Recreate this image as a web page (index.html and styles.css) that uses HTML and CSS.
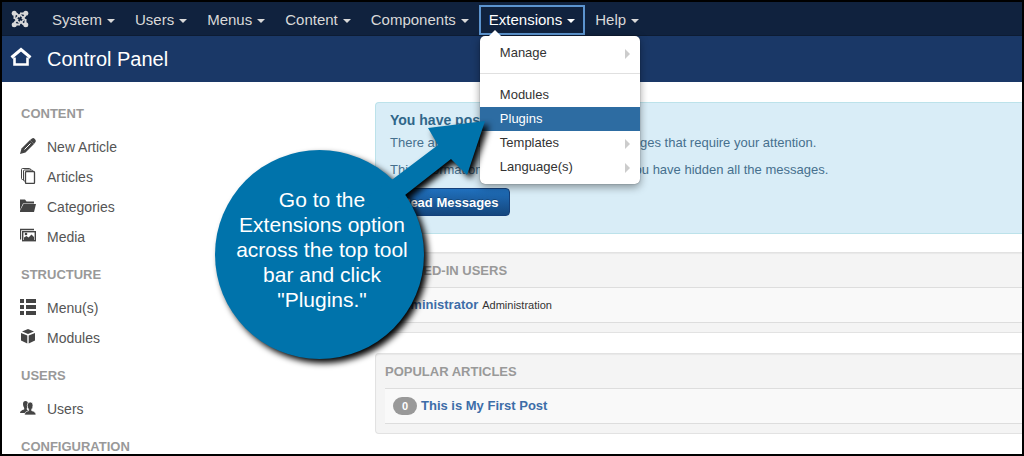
FILE: index.html
```
<!DOCTYPE html>
<html lang="en">
<head>
    <meta charset="UTF-8">
    <title>Control Panel</title>
    <link rel="stylesheet" href="styles.css">
</head>
<body>
    <div id="container">
        <nav class="navbar">
            <a class="brand" href="#" aria-label="Joomla">
                <svg width="18" height="18" viewBox="0 0 18 18" fill="none" stroke="#d9d9d9">
                    <path d="M3.500 9V5.500Q3.500 3 6 4L9 7M9 3.500H12.500Q15 3.500 14 6L11 9M14.500 9V12.500Q14.500 15 12 14L9 11M9 14.500H5.500Q3 14.500 4 12L7 9" stroke-width="2"/>
                    <path d="M4.500 9L9 4.500L13.500 9L9 13.500Z" stroke-width="1.500"/>
                    <g fill="#d9d9d9" stroke="none">
                        <circle cx="3.200" cy="3.200" r="2.500"/>
                        <circle cx="14.800" cy="3.200" r="2.500"/>
                        <circle cx="3.200" cy="14.800" r="2.500"/>
                        <circle cx="14.800" cy="14.800" r="2.500"/>
                    </g>
                </svg>
            </a>
            <ul class="nav">
                <li><a href="#">System<span class="caret"></span></a></li>
                <li><a href="#">Users<span class="caret"></span></a></li>
                <li><a href="#">Menus<span class="caret"></span></a></li>
                <li><a href="#">Content<span class="caret"></span></a></li>
                <li><a href="#">Components<span class="caret"></span></a></li>
                <li class="open">
                    <a href="#">Extensions<span class="caret"></span></a>
                    <ul class="dropdown">
                        <li><a class="sub" href="#">Manage</a></li>
                        <li class="divider"></li>
                        <li><a href="#">Modules</a></li>
                        <li><a class="selected" href="#">Plugins</a></li>
                        <li><a class="sub" href="#">Templates</a></li>
                        <li><a class="sub" href="#">Language(s)</a></li>
                    </ul>
                </li>
                <li><a href="#">Help<span class="caret"></span></a></li>
            </ul>
        </nav>

        <header class="header">
            <svg width="22" height="20" viewBox="0 0 22 20" fill="none" stroke="#fff">
                <path d="M1.500 10.500L11 2.500L20.500 10.500" stroke-width="3"/>
                <path d="M4.500 10.500V17.500H17.500V10.500" stroke-width="2.600"/>
            </svg>
            <h1>Control Panel</h1>
        </header>

        <div class="content">
            <aside class="sidebar">
                <h2>CONTENT</h2>
                <ul>
                    <li><a href="#">
                        <svg width="16" height="16" viewBox="0 0 16 16">
                            <path d="M0 16L1.500 10.500L10 2L14 6L5.500 14.500Z" fill="#444"/>
                            <path d="M10 2L12 .400Q13.500-.500 14.800 1Q16.400 2.600 15.500 4L14 6Z" fill="#444"/>
                            <path d="M4.500 11.500L10.500 5.500" stroke="#fff" stroke-width="1"/>
                        </svg>New Article</a></li>
                    <li><a href="#">
                        <svg width="16" height="16" viewBox="0 0 16 16" fill="#fff" stroke="#444">
                            <rect x="1.500" y=".500" width="9" height="11" rx="1"/>
                            <rect x="3.500" y="2" width="9" height="11" rx="1"/>
                            <rect x="5.500" y="3.500" width="9" height="12" rx="1" stroke-width="1.300"/>
                        </svg>Articles</a></li>
                    <li><a href="#">
                        <svg width="16" height="16" viewBox="0 0 16 16" fill="#444">
                            <path d="M0 1.500H5L6.500 3.500H14V5.500H3L0 12Z"/>
                            <path d="M3.500 6H16L14 14H0V12.500Z"/>
                        </svg>Categories</a></li>
                    <li><a href="#">
                        <svg width="16" height="16" viewBox="0 0 16 16" fill="none" stroke="#444">
                            <path d="M.500 11.500V1.500H14" stroke-width="1.300"/>
                            <rect x="2.700" y="3.700" width="12.600" height="9" stroke-width="1.400"/>
                            <path d="M4 12V9.500L6.500 8L8.500 9.500L11.500 6.500L14 9V12Z" fill="#444" stroke="none"/>
                            <circle cx="6" cy="6" r="1.300" fill="#444" stroke="none"/>
                        </svg>Media</a></li>
                </ul>
                <h2>STRUCTURE</h2>
                <ul>
                    <li><a href="#">
                        <svg width="16" height="16" viewBox="0 0 16 16" fill="#444">
                            <path d="M0 0H4V4H0ZM6 0H16V4H6ZM0 6H4V10H0ZM6 6H16V10H6ZM0 12H4V16H0ZM6 12H16V16H6Z"/>
                        </svg>Menu(s)</a></li>
                    <li><a href="#">
                        <svg width="16" height="16" viewBox="0 0 16 16" fill="#444">
                            <path d="M8 0L14 2.500L8 5L2 2.500ZM1 4L7.300 6.500V14.500L1 11.500ZM15 4L8.700 6.500V14.500L15 11.500Z"/>
                        </svg>Modules</a></li>
                </ul>
                <h2>USERS</h2>
                <ul>
                    <li><a href="#">
                        <svg width="16" height="16" viewBox="0 0 16 16" fill="#444">
                            <path d="M3 4Q3 1 5.500 1Q8 1 8 4Q8 6.500 6.800 8V9.500L9 11V13H0Q0 10.500 4.200 9.500V8Q3 6.500 3 4Z"/>
                            <path d="M7.300 5.200Q7.300 2 10.200 2Q13 2 13 5.200Q13 8 11.700 9.300V10.700Q16 11.500 16 15H4.500Q4.500 11.700 8.600 10.700V9.300Q7.300 8 7.300 5.200Z" stroke="#fff" stroke-width=".700"/>
                        </svg>Users</a></li>
                </ul>
                <h2>CONFIGURATION</h2>
            </aside>

            <main class="main">
                <section class="alert">
                    <h3>You have post-installation messages</h3>
                    <p>There are important post-installation messages that require your attention.</p>
                    <p>This information area won't appear when you have hidden all the messages.</p>
                    <button type="button" class="btn">Read Messages</button>
                </section>
                <section class="well">
                    <h2>LOGGED-IN USERS</h2>
                    <div class="row"><a href="#">Administrator</a><small>Administration</small></div>
                </section>
                <section class="well">
                    <h2>POPULAR ARTICLES</h2>
                    <div class="row"><span class="badge">0</span><a href="#">This is My First Post</a></div>
                </section>
            </main>
        </div>

        <div class="callout">
            <svg width="290" height="260" viewBox="0 0 290 260" fill="#0073ab">
                <circle cx="106.500" cy="141.500" r="104.500"/>
                <path d="M140 94L180 66L225 32L215 15L272 8L254 62L238 46L192 82L152 112Z"/>
            </svg>
            <p>Go to the<br>Extensions option<br>across the top tool<br>bar and click<br>"Plugins."</p>
        </div>
    </div>
</body>
</html>
```
FILE: styles.css
```
*{
    margin: 0;
    padding: 0;
    box-sizing: border-box;
}
ul{
    list-style: none;
}
a{
    text-decoration: none;
}
svg{
    display: block;
    flex: none;
}
body{
    font: 13px/18px "Liberation Sans", Arial, sans-serif;
    color: #333;
    background: #fff;
}
#container{
    position: relative;
    height: 100vh;
    border: 2px solid #000;
    overflow: hidden;
}
.navbar{
    display: flex;
    height: 34px;
    background: #10223e;
    border-bottom: 1px solid #0d1c33;
}
.brand{
    padding: 8px 13px 0 9px;
}
.nav{
    display: flex;
    padding-top: 3px;
}
.nav > li{
    position: relative;
}
.nav > li > a{
    display: flex;
    align-items: center;
    height: 30px;
    padding: 0 10px;
    font-size: 15px;
    color: #d9d9d9;
}
.caret{
    margin: 2px 0 0 5px;
    border-top: 4px solid #d9d9d9;
    border-left: 4px solid transparent;
    border-right: 4px solid transparent;
}
.nav > .open > a{
    color: #fff;
    box-shadow: inset 0 0 0 2px #5c94cf;
}
.open .caret{
    border-top-color: #fff;
}
.dropdown{
    position: absolute;
    left: 1px;
    top: 31px;
    z-index: 2;
    width: 160px;
    padding: 5px 0;
    background: #fff;
    border-radius: 5px;
    box-shadow: 0 3px 8px rgba(0,0,0,0.4), 0 0 1px rgba(0,0,0,0.6);
}
.dropdown:before{
    content: "";
    position: absolute;
    left: 9px;
    top: -6px;
    border-bottom: 6px solid #fff;
    border-left: 6px solid transparent;
    border-right: 6px solid transparent;
}
.dropdown a{
    display: flex;
    align-items: center;
    justify-content: space-between;
    height: 24px;
    padding: 0 10px 0 20px;
    color: #333;
}
.dropdown .sub:after{
    content: "";
    margin-top: 2px;
    border-left: 5px solid #ccc;
    border-top: 5px solid transparent;
    border-bottom: 5px solid transparent;
}
.dropdown .selected{
    background: #2d6ca2;
    color: #fff;
}
.dropdown .divider{
    height: 1px;
    margin: 8px 0 9px;
    background: #e0e0e0;
}
.header{
    display: flex;
    align-items: center;
    height: 46px;
    padding-left: 8px;
    gap: 15px;
    background: #1a3867;
    color: #fff;
}
.header svg{
    margin-bottom: 4px;
}
.header h1{
    font-size: 20px;
    line-height: 24px;
    font-weight: normal;
}
.content{
    display: flex;
    padding-top: 20px;
}
.sidebar{
    flex: 0 0 373px;
    padding-left: 18px;
}
h2{
    font-size: 13px;
    line-height: 18px;
    color: #999;
}
.sidebar h2{
    padding: 3px 0 0 1px;
    margin-bottom: 9px;
}
.sidebar ul{
    margin-bottom: 11px;
}
.sidebar li{
    height: 30px;
}
.sidebar li a{
    display: flex;
    align-items: center;
    gap: 11px;
    height: 30px;
    font-size: 14px;
    color: #555;
}
.sidebar li svg{
    margin-bottom: 3px;
}
.main{
    flex: 1;
    min-width: 0;
}
.alert{
    padding: 7px 14px 17px;
    margin-bottom: 18px;
    background: #d9edf7;
    border: 1px solid #bce2ea;
    border-right: 0;
    border-radius: 4px 0 0 4px;
    color: #46708e;
}
.alert h3{
    font-size: 14px;
    line-height: 20px;
    color: #2f6689;
    margin-bottom: 4px;
}
.alert p{
    margin-bottom: 9px;
}
.btn{
    display: block;
    height: 28px;
    padding: 0 10px;
    font: bold 13px "Liberation Sans", Arial, sans-serif;
    color: #fff;
    text-shadow: 0 -1px 0 rgba(0,0,0,0.25);
    background: linear-gradient(#2070bd, #15477e);
    border: 1px solid #15407a;
    border-radius: 4px;
}
.well{
    padding: 9px 0 9px 9px;
    margin-bottom: 20px;
    background: #f4f4f4;
    border: 1px solid #e2e2e2;
    border-right: 0;
    border-radius: 4px 0 0 4px;
    box-shadow: inset 0 1px 1px rgba(0,0,0,0.05);
}
.well h2{
    margin-bottom: 7px;
}
.row{
    display: flex;
    align-items: center;
    gap: 4px;
    height: 36px;
    padding-left: 8px;
    background: #f9f9f9;
    border-top: 1px solid #ddd;
    border-bottom: 1px solid #ddd;
}
.row a{
    font-weight: bold;
    color: #3d6da8;
}
.row small{
    font-size: 11px;
}
.badge{
    width: 24px;
    border-radius: 9px;
    background: #999;
    color: #fff;
    font-size: 11px;
    font-weight: bold;
    text-align: center;
}
/* sits over the page and points at the open menu */
.callout{
    position: absolute;
    left: 211px;
    top: 111px;
    z-index: 3;
}
.callout svg{
    overflow: visible;
    filter: drop-shadow(4px 4px 3px #000);
}
.callout p{
    position: absolute;
    left: 0;
    top: 74px;
    width: 218px;
    font-size: 21px;
    line-height: 25px;
    color: #fff;
    text-align: center;
}
```
